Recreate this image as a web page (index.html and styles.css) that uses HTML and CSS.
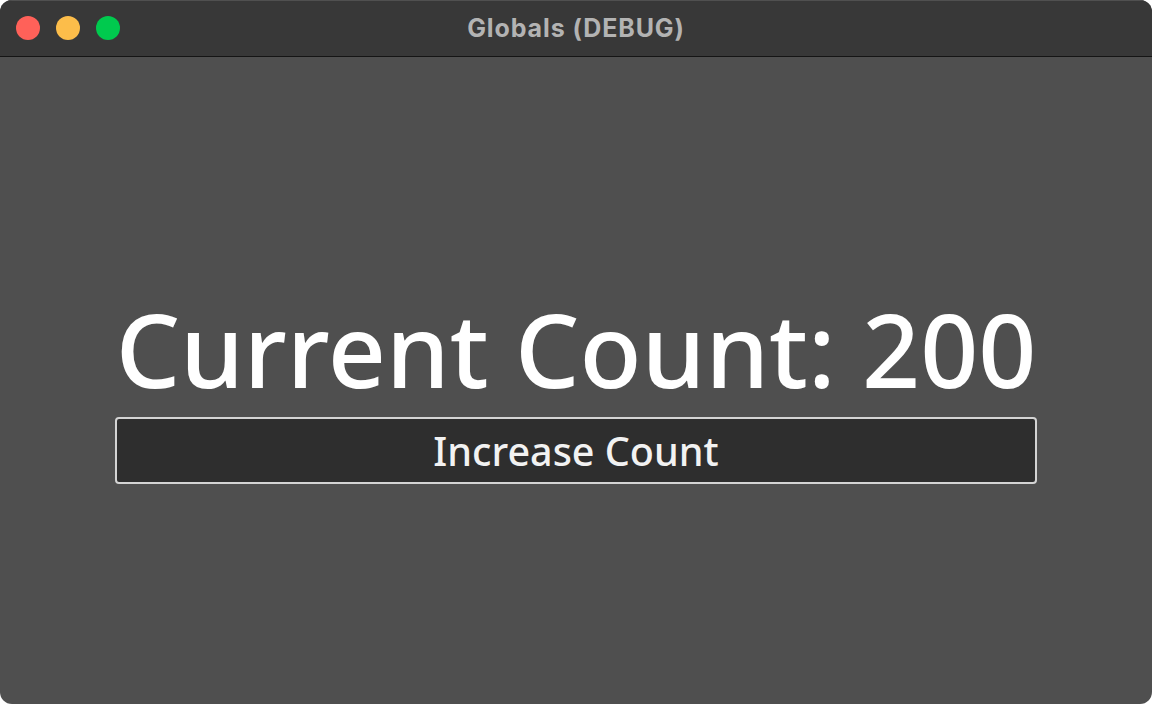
FILE: index.html
```html
<!DOCTYPE html>
<html>
<head>
<meta charset="utf-8">
<link rel="stylesheet" href="styles.css">
</head>
<body>
<div class="window">
  <div class="titlebar">
    <div class="lights">
      <span class="light red"></span>
      <span class="light yellow"></span>
      <span class="light green"></span>
    </div>
    <div class="title">Globals (DEBUG)</div>
  </div>
  <div class="content">
    <div class="count">Current Count: 200</div>
    <button class="btn">Increase Count</button>
  </div>
</div>
</body>
</html>
```
FILE: styles.css
```css
html, body {
  margin: 0;
  padding: 0;
  background: #ffffff;
}
.window {
  width: 1152px;
  height: 704px;
  border-radius: 12px;
  overflow: hidden;
  display: flex;
  flex-direction: column;
  background: #4f4f4f;
}
.titlebar {
  height: 56px;
  flex: none;
  background: #383838;
  border-bottom: 1px solid #151515;
  box-shadow: inset 0 1px 0 #505050;
  display: flex;
  align-items: center;
  justify-content: center;
  position: relative;
}
.lights {
  position: absolute;
  left: 16px;
  top: 16px;
  display: flex;
  gap: 16px;
}
.light {
  width: 24px;
  height: 24px;
  border-radius: 50%;
  display: block;
}
.red { background: #ff6159; }
.yellow { background: #fcbd4a; }
.green { background: #00ca4e; }
.title {
  font-family: "Inter", "Liberation Sans", sans-serif;
  font-weight: 700;
  font-size: 25px;
  letter-spacing: 0.9px;
  color: #b3b3b3;
}
.content {
  flex: 1;
  display: flex;
  flex-direction: column;
  align-items: center;
  justify-content: flex-start;
  padding-top: 237px;
}
.count {
  font-family: "Noto Sans", "Open Sans", sans-serif;
  font-weight: 500;
  font-size: 101.6px;
  line-height: 110px;
  color: #ffffff;
}
.btn {
  margin-top: 13px;
  width: 922px;
  height: 67px;
  background: #2e2e2e;
  border: 2px solid #d4d4d4;
  border-radius: 4px;
  font-family: "Noto Sans", "Open Sans", sans-serif;
  font-weight: 500;
  font-size: 39.5px;
  color: #f2f2f2;
  padding: 0;
}
```
